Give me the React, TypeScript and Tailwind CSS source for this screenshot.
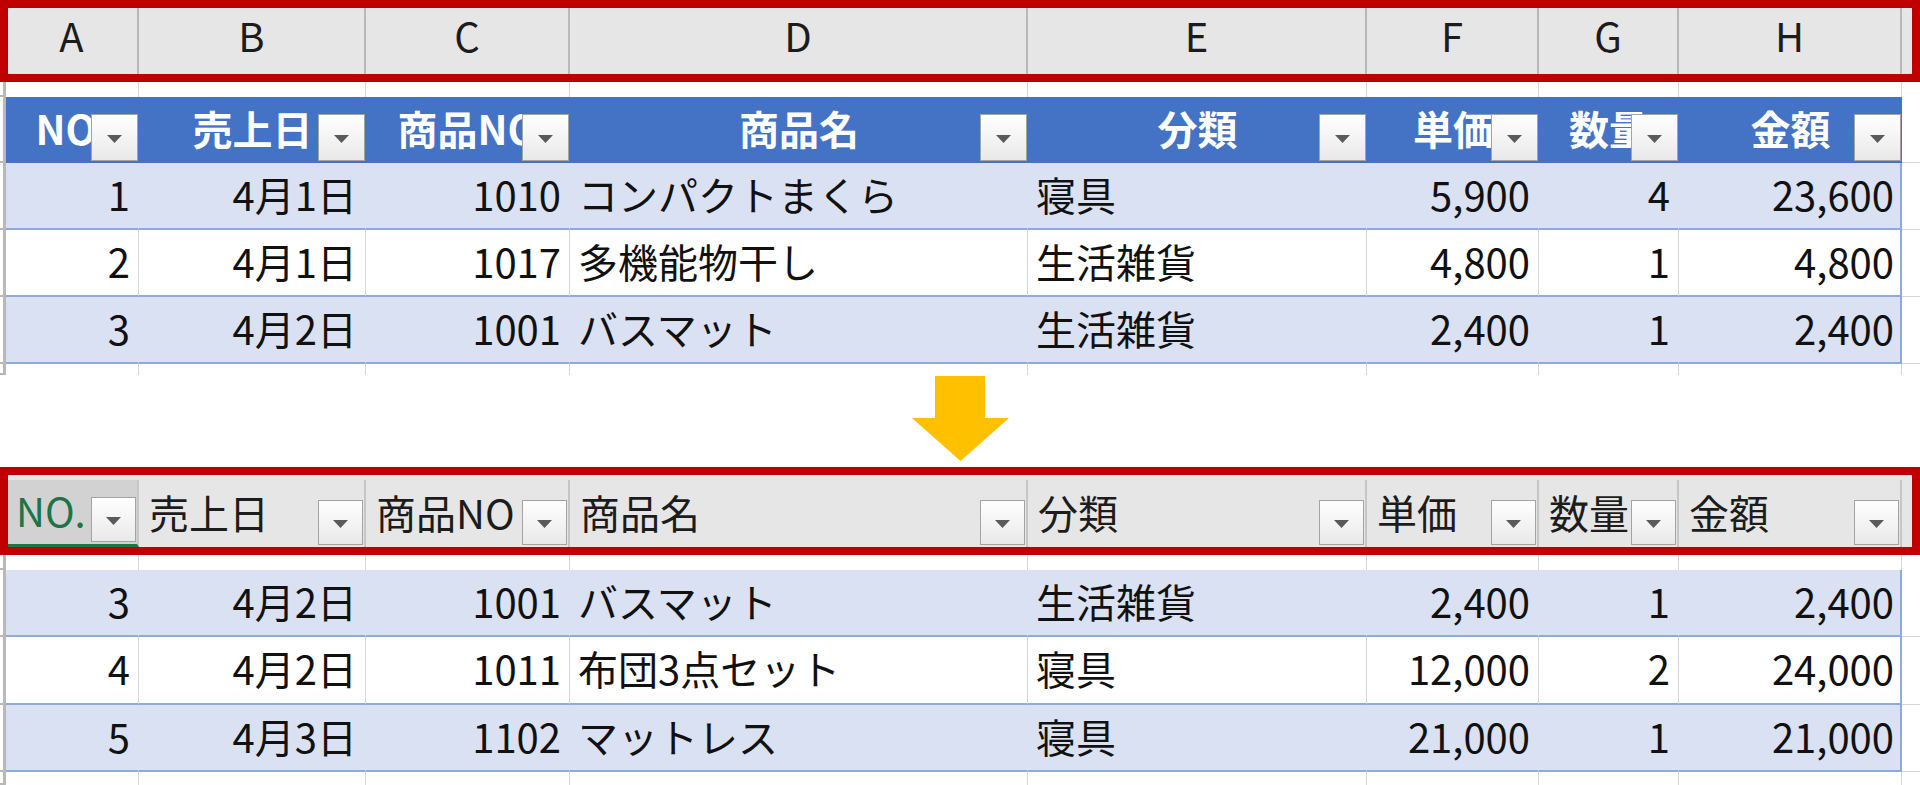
import React from "react";

const FONT = "font-['Noto_Sans_CJK_JP','Noto_Sans',sans-serif]";

const W = [
  "w-[133px]",
  "w-[227px]",
  "w-[204px]",
  "w-[458px]",
  "w-[339px]",
  "w-[172px]",
  "w-[140px]",
  "w-[223px]",
];

const ALIGN = [
  "justify-end pr-[8px]",
  "justify-end pr-[8px]",
  "justify-end pr-[8px]",
  "justify-start pl-[8px]",
  "justify-start pl-[8px]",
  "justify-end pr-[8px]",
  "justify-end pr-[8px]",
  "justify-end pr-[6px]",
];

const LETTERS = ["A", "B", "C", "D", "E", "F", "G", "H"];
const HEADERS = ["NO.", "売上日", "商品NO", "商品名", "分類", "単価", "数量", "金額"];

const TOP_ROWS = [
  ["1", "4月1日", "1010", "コンパクトまくら", "寝具", "5,900", "4", "23,600"],
  ["2", "4月1日", "1017", "多機能物干し", "生活雑貨", "4,800", "1", "4,800"],
  ["3", "4月2日", "1001", "バスマット", "生活雑貨", "2,400", "1", "2,400"],
];

const BOTTOM_ROWS = [
  ["3", "4月2日", "1001", "バスマット", "生活雑貨", "2,400", "1", "2,400"],
  ["4", "4月2日", "1011", "布団3点セット", "寝具", "12,000", "2", "24,000"],
  ["5", "4月3日", "1102", "マットレス", "寝具", "21,000", "1", "21,000"],
];

function FilterBtn({ big }: { big: boolean }) {
  return (
    <div
      className={`absolute right-[1px] bottom-[2px] ${
        big ? "w-[47px] h-[47px]" : "w-[45px] h-[45px]"
      } border border-[#a3a3a3] bg-linear-to-b from-white to-[#e9e9e9] flex items-center justify-center`}
    >
      <svg width="15" height="8" viewBox="0 0 15 8" className="mt-[2px]">
        <polygon points="0,0 15,0 7.5,8" fill="#5a5a5a" />
      </svg>
    </div>
  );
}

function Stub() {
  return <div className="w-[6px] shrink-0 border-r-[3px] border-b-2 border-[#b8b8b8]" />;
}

function SpacerRow({ h }: { h: string }) {
  return (
    <div className={`flex ${h}`}>
      <Stub />
      {W.map((w, i) => (
        <div key={i} className={`${w} shrink-0 border-r border-[#d6d6d6]`} />
      ))}
      <div className="flex-1" />
    </div>
  );
}

function DataRow({ row, band, h }: { row: string[]; band: boolean; h: string }) {
  return (
    <div className={`flex ${h}`}>
      <Stub />
      {row.map((v, i) => (
        <div
          key={i}
          className={`${W[i]} ${ALIGN[i]} shrink-0 flex items-center border-b-2 border-b-[#8ea9db] ${
            i === 7
              ? "border-r-2 border-r-[#8ea9db]"
              : band
              ? "border-r border-r-[#d9e1f2]"
              : "border-r border-r-[#d6d6d6]"
          } ${band ? "bg-[#d9e1f2]" : "bg-white"} text-[40px] leading-none text-[#111111] whitespace-nowrap overflow-hidden`}
        >
          <span className="pb-[4px]">{v}</span>
        </div>
      ))}
      <div className="flex-1 border-b border-[#d6d6d6]" />
    </div>
  );
}

function TopSection() {
  return (
    <div className="relative">
      <div className="flex h-[75px] bg-[#e6e6e6] border-b border-[#a0a0a0]">
        <div className="w-[6px] shrink-0" />
        {LETTERS.map((l, i) => (
          <div
            key={l}
            className={`${W[i]} shrink-0 border-r-2 border-[#b9b9b9] flex items-center justify-center text-[40px] leading-none text-[#1c1c1c]`}
          >
            <span className="pb-[4px]">{l}</span>
          </div>
        ))}
        <div className="flex-1" />
      </div>
      <SpacerRow h="h-[22px]" />
      <div className="flex h-[66px]">
        <Stub />
        {HEADERS.map((t, i) => (
          <div
            key={t}
            className={`${W[i]} shrink-0 relative bg-[#4472c4] flex items-center justify-center text-[40px] leading-none font-bold text-white whitespace-nowrap overflow-hidden`}
          >
            <span className="pb-[4px]">{t}</span>
            <FilterBtn big />
          </div>
        ))}
        <div className="flex-1 border-b border-[#d6d6d6]" />
      </div>
      {TOP_ROWS.map((r, i) => (
        <DataRow key={i} row={r} band={i % 2 === 0} h="h-[67px]" />
      ))}
      <SpacerRow h="h-[11px]" />
      <div className="absolute left-0 top-0 w-[1920px] h-[82px] border-[8px] border-[#c00000] pointer-events-none" />
    </div>
  );
}

function ArrowArea() {
  return (
    <div className="h-[92px] flex justify-center items-start pt-px">
      <svg width="97" height="85" viewBox="0 0 97 85">
        <polygon points="23,0 73,0 73,42 97,42 48.5,85 0,42 23,42" fill="#ffc000" />
      </svg>
    </div>
  );
}

function BottomSection() {
  return (
    <div>
      <div className="relative h-[88px] bg-[#e6e6e6] flex flex-col">
        <div className="h-[13px]" />
        <div className="flex h-[67px]">
          <div className="w-[6px] shrink-0" />
          {HEADERS.map((t, i) => (
            <div
              key={t}
              className={`${W[i]} shrink-0 relative flex items-center pl-[10px] text-[40px] leading-none whitespace-nowrap overflow-hidden border-r-2 border-r-[#c6c6c6] ${
                i === 0
                  ? "bg-[#d2d2d2] text-[#217346] border-b-[3px] border-b-[#217346]"
                  : "text-[#1c1c1c]"
              }`}
            >
              <span className="pb-[4px]">{t}</span>
              <FilterBtn big={false} />
            </div>
          ))}
          <div className="flex-1" />
        </div>
        <div className="absolute left-0 top-0 w-[1920px] h-[88px] border-[8px] border-[#c00000] pointer-events-none" />
      </div>
      <SpacerRow h="h-[15px]" />
      <DataRow row={BOTTOM_ROWS[0]} band h="h-[67px]" />
      <DataRow row={BOTTOM_ROWS[1]} band={false} h="h-[68px]" />
      <DataRow row={BOTTOM_ROWS[2]} band h="h-[67px]" />
      <SpacerRow h="h-[13px]" />
    </div>
  );
}

export default function App() {
  return (
    <div className={`w-[1920px] h-[785px] bg-white overflow-hidden ${FONT}`}>
      <TopSection />
      <ArrowArea />
      <BottomSection />
    </div>
  );
}
